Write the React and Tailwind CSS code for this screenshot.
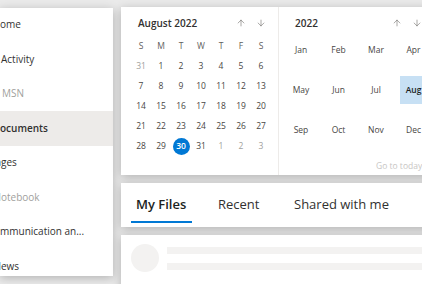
import React from 'react';
import { ArrowUp, ArrowDown } from 'lucide-react';

const navItems = [
    { hidden: 'H', label: 'ome', pad: 'pl-[0px]' },
    { hidden: '', label: 'Activity', pad: 'pl-[1px]' },
    { hidden: '', label: 'MSN', pad: 'pl-[2px]', disabled: true },
    { hidden: 'D', label: 'ocuments', pad: 'pl-[0px]', selected: true },
    { hidden: 'Pa', label: 'ges', pad: 'pl-[1px]' },
    { hidden: 'N', label: 'otebook', pad: 'pl-[1px]', disabled: true },
    { hidden: 'Co', label: 'mmunication an...', pad: 'pl-[0px]' },
    { hidden: 'N', label: 'ews', pad: 'pl-[1px]' },
];

const dayNames = ['S', 'M', 'T', 'W', 'T', 'F', 'S'];

// August 2022 with the edges of July and September
const days = [
    [31, 1, 2, 3, 4, 5, 6],
    [7, 8, 9, 10, 11, 12, 13],
    [14, 15, 16, 17, 18, 19, 20],
    [21, 22, 23, 24, 25, 26, 27],
    [28, 29, 30, 31, 1, 2, 3],
];

const months = ['Jan', 'Feb', 'Mar', 'Apr', 'May', 'Jun', 'Jul', 'Aug', 'Sep', 'Oct', 'Nov', 'Dec'];

function NavPanel() {
    return (
        <nav className="w-[113px] h-[268px] mt-[7.5px] shrink-0 bg-white overflow-hidden shadow-[0_2px_9px_rgba(0,0,0,0.24)]">
            {navItems.map((item, i) => (
                <div
                    key={i}
                    className={
                        'h-[34.5px] flex items-center text-[10px] whitespace-nowrap ' +
                        item.pad + ' ' +
                        (item.selected ? 'bg-[#edebe9] font-semibold text-[#201f1e] ' : '') +
                        (item.disabled ? 'text-[#a19f9d]' : 'text-[#323130]')
                    }
                >
                    <span className="relative">
                        {item.hidden && <span className="absolute right-full">{item.hidden}</span>}
                        {item.label}
                    </span>
                </div>
            ))}
        </nav>
    );
}

function NavArrows() {
    return (
        <>
            <span className="w-[20px] flex justify-center text-[#605e5c]">
                <ArrowUp size={10} strokeWidth={1.3} />
            </span>
            <span className="w-[20px] flex justify-center text-[#605e5c]">
                <ArrowDown size={10} strokeWidth={1.3} />
            </span>
        </>
    );
}

function DayPicker() {
    return (
        <div className="w-[158px] shrink-0 border-r border-[#edebe9] pl-[10px] pt-[6px]">
            <div className="w-[140px] h-[20px] flex items-center">
                <span className="pl-[7px] text-[10px] font-semibold text-[#323130]">August 2022</span>
                <span className="ml-auto flex"><NavArrows /></span>
            </div>
            <div className="mt-[3px] grid grid-cols-[repeat(7,20px)] auto-rows-[20px] text-[8.5px]">
                {dayNames.map((d, i) => (
                    <span key={'h' + i} className="flex items-center justify-center text-[#605e5c]">{d}</span>
                ))}
                {days.map((week, r) =>
                    week.map((n, c) => {
                        const outside = (r === 0 && n > 7) || (r === 4 && n < 7);
                        const selected = r === 4 && n === 30;
                        return (
                            <span key={r + '-' + c} className="flex items-center justify-center">
                                {selected ? (
                                    <span className="w-[17px] h-[17px] rounded-full bg-[#0078d4] text-white font-semibold flex items-center justify-center">
                                        {n}
                                    </span>
                                ) : (
                                    <span className={outside ? 'text-[#a19f9d]' : 'text-[#484644]'}>{n}</span>
                                )}
                            </span>
                        );
                    })
                )}
            </div>
        </div>
    );
}

function MonthPicker() {
    return (
        <div className="flex-1 pt-[6px]">
            <div className="w-[148px] h-[20px] flex items-center">
                <span className="pl-[16px] text-[10px] font-semibold text-[#323130]">2022</span>
                <span className="ml-auto flex"><NavArrows /></span>
            </div>
            <div className="mt-[3px] pl-[8px] grid grid-cols-[repeat(4,28px)] auto-rows-[28px] gap-x-[9.5px] gap-y-[12px] text-[8.5px] text-[#484644]">
                {months.map((m) => (
                    <span
                        key={m}
                        className={
                            'flex items-center justify-center ' +
                            (m === 'Aug' ? 'bg-[#c7e0f4] text-[#201f1e] font-semibold' : '')
                        }
                    >
                        {m}
                    </span>
                ))}
            </div>
            <div className="mt-[15px] pl-[97px] text-[8.5px] leading-[14px] text-[#c8c6c4] whitespace-nowrap">Go to today</div>
        </div>
    );
}

function Tabs() {
    return (
        <div className="mt-[8px] h-[44px] bg-white flex items-stretch text-[13px] text-[#323130] shadow-[0_2px_9px_rgba(0,0,0,0.24)] whitespace-nowrap">
            <div className="ml-[10px] w-[87px] flex flex-col">
                <span className="flex-1 pt-[6px] pl-[5px] flex items-center font-semibold text-[#201f1e]">My Files</span>
                <span className="w-[61px] h-[2px] mb-[4px] bg-[#0078d4]" />
            </div>
            <div className="w-[76px] pt-[6px] pb-[6px] flex items-center">Recent</div>
            <div className="pt-[6px] pb-[6px] flex items-center">Shared with me</div>
        </div>
    );
}

function Shimmer() {
    return (
        <div className="mt-[8px] h-[80px] bg-white pl-[10px] pt-[9px] shadow-[0_2px_9px_rgba(0,0,0,0.24)]">
            <div className="flex items-center">
                <div className="w-[28px] h-[28px] rounded-full bg-[#f3f2f1] shrink-0" />
                <div className="ml-[8px] flex-1 flex flex-col gap-[9px]">
                    <div className="h-[7px] bg-[#f3f2f1]" />
                    <div className="h-[7px] bg-[#f3f2f1]" />
                </div>
            </div>
            <div className="mt-[14px] flex items-center gap-[16px]">
                <div className="w-[56px] h-[8px] bg-[#f3f2f1]" />
                <div className="w-[14px] h-[14px] rounded-full bg-[#f3f2f1]" />
            </div>
        </div>
    );
}

export default function App() {
    return (
        <div className="w-[422px] h-[284px] overflow-hidden bg-[#eaeaea] flex items-start font-['Open_Sans',sans-serif]">
            <NavPanel />
            <div className="ml-[8px] mt-[7px] w-[330px] shrink-0 flex flex-col">
                <div className="h-[168px] bg-white flex shadow-[0_2px_9px_rgba(0,0,0,0.24)]">
                    <DayPicker />
                    <MonthPicker />
                </div>
                <Tabs />
                <Shimmer />
            </div>
        </div>
    );
}
